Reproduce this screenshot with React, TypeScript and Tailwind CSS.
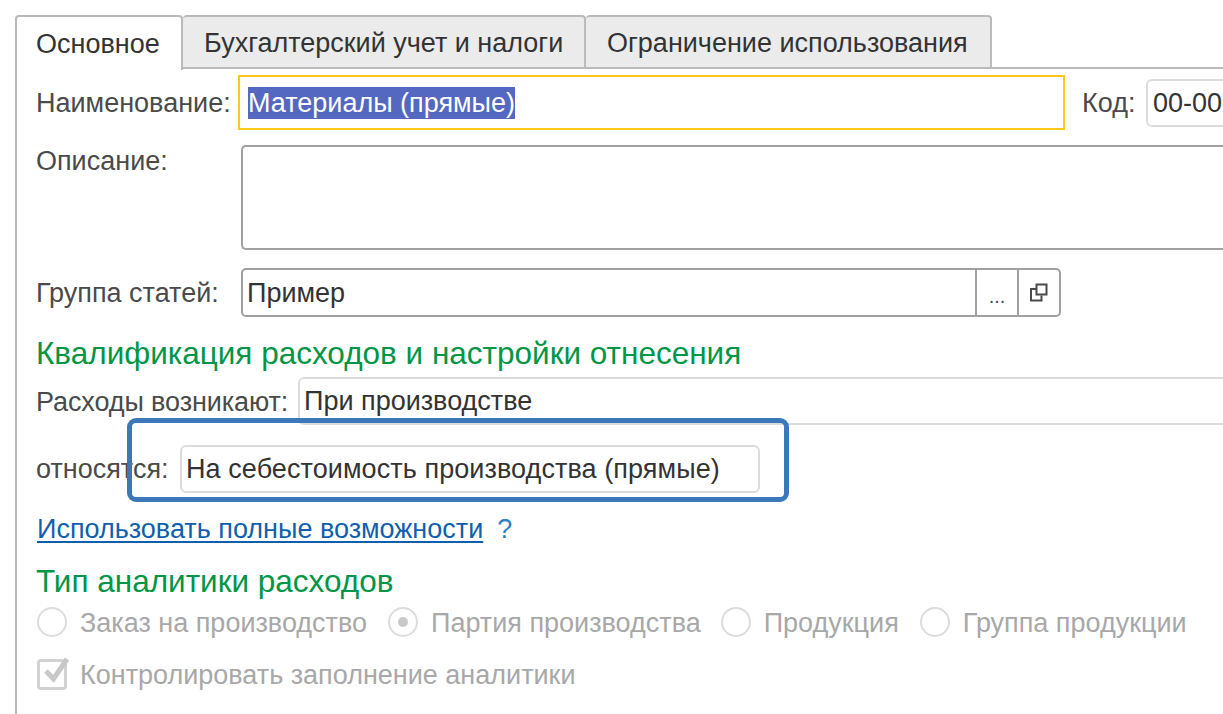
import React from "react";

function Radio({ label, checked, cls }: { label: string; checked?: boolean; cls: string }) {
  return (
    <div className={"flex items-center " + cls}>
      <span className="flex h-[30px] w-[30px] shrink-0 items-center justify-center rounded-full border-2 border-[#dcdcdc] bg-white">
        {checked && <span className="h-[10px] w-[10px] rounded-full bg-[#c8c8c8]" />}
      </span>
      <span className="ml-[13px] whitespace-nowrap pt-[1px] text-[#a8a8a8]">{label}</span>
    </div>
  );
}

export default function App() {
  return (
    <div className="relative h-[714px] w-[1223px] overflow-hidden bg-white pl-[15px] pt-[15px] font-['Liberation_Sans',Arial,sans-serif] text-[27px] leading-[30px] text-[#4a4a4a]">
      <div className="flex h-[55px] items-stretch">
        <div className="z-10 flex h-[55px] w-[168px] items-center rounded-t-[4px] border-x-2 border-t-2 border-[#bababa] bg-white pl-[19px] text-[#333]">
          Основное
        </div>
        <div className="flex h-[54px] w-[403px] items-center rounded-t-[4px] border-y-2 border-r-2 border-[#bababa] bg-[#ebebeb] pl-[21px] pt-[1px] text-[#333]">
          Бухгалтерский учет и налоги
        </div>
        <div className="flex h-[54px] w-[406px] items-center rounded-t-[4px] border-y-2 border-r-2 border-[#bababa] bg-[#ebebeb] pl-[21px] pt-[1px] text-[#333]">
          Ограничение использования
        </div>
        <div className="h-[54px] flex-1 border-b-2 border-[#bababa]" />
      </div>

      <div className="h-[700px] border-l-2 border-[#bababa] pl-[19px] pt-[5px]">
        <div className="flex h-[55px] items-center">
          <span className="w-[202px] shrink-0 whitespace-nowrap">Наименование:</span>
          <div className="flex h-[55px] w-[827px] shrink-0 items-center border-2 border-[#fcc916] pl-[8px]">
            <span className="whitespace-nowrap bg-[#5468c2] leading-[32px] text-white">Материалы (прямые)</span>
          </div>
          <span className="ml-[17px] w-[64px] shrink-0 whitespace-nowrap">Код:</span>
          <div className="flex h-[48px] w-[120px] shrink-0 items-center overflow-hidden rounded-l-[6px] border-y-2 border-l-2 border-[#dcdcdc] pl-[5px] text-[#333]">
            <span className="whitespace-nowrap">00-000000</span>
          </div>
        </div>

        <div className="mt-[15px] flex h-[105px]">
          <span className="w-[205px] shrink-0 pt-[1px]">Описание:</span>
          <div className="h-[105px] w-[1000px] shrink-0 rounded-l-[5px] border-y-2 border-l-2 border-[#a0a0a0]" />
        </div>

        <div className="mt-[18px] flex h-[49px] items-center">
          <span className="w-[205px] shrink-0 whitespace-nowrap pt-[1px]">Группа статей:</span>
          <div className="flex h-[49px] w-[820px] shrink-0 items-stretch rounded-[5px] border-2 border-[#a0a0a0]">
            <div className="flex flex-1 items-center pl-[4px] text-[#333]">Пример</div>
            <div className="flex w-[42px] justify-center border-l-2 border-[#a0a0a0] pt-[14px] text-[20px] leading-[24px] text-[#4a4a4a]">...</div>
            <div className="flex w-[42px] items-center justify-center border-l-2 border-[#a0a0a0]">
              <svg width="20" height="20" viewBox="0 0 20 20" fill="none" stroke="#4a4a4a" strokeWidth="2">
                <rect x="7.5" y="1.5" width="10" height="10" />
                <path d="M7 6H2V17.5H12.5V12.5" />
              </svg>
            </div>
          </div>
        </div>

        <div className="mt-[21px] whitespace-nowrap text-[31.5px] leading-[30px] text-[#009646]">Квалификация расходов и настройки отнесения</div>

        <div className="mt-[9px] flex h-[48px] items-center">
          <span className="w-[262px] shrink-0 whitespace-nowrap pt-[1px] tracking-[-0.1px]">Расходы возникают:</span>
          <div className="flex h-[48px] w-[1000px] shrink-0 items-center rounded-l-[6px] border-y-2 border-l-2 border-[#dcdcdc] pl-[4px] text-[#333]">
            При производстве
          </div>
        </div>

        <div className="mt-[20px] flex h-[48px] items-center">
          <span className="w-[144px] shrink-0 whitespace-nowrap pb-[1px]">относятся:</span>
          <div className="flex h-[48px] w-[580px] shrink-0 items-center rounded-[6px] border-2 border-[#dcdcdc] pb-[1px] pl-[4px] text-[#333] tracking-[0.08px]">
            На себестоимость производства (прямые)
          </div>
        </div>

        <div className="mt-[21px] flex h-[30px] items-center whitespace-nowrap">
          <a className="ml-[1px] text-[#0f5fae] underline underline-offset-[3px]">Использовать полные возможности</a>
          <span className="ml-[14px] text-[#2b7fc4]">?</span>
        </div>

        <div className="mt-[22px] whitespace-nowrap text-[31.5px] leading-[30px] text-[#009646]">Тип аналитики расходов</div>

        <div className="mt-[11px] flex h-[30px]">
          <Radio cls="ml-[1px]" label="Заказ на производство" />
          <Radio cls="ml-[21px]" checked label="Партия производства" />
          <Radio cls="ml-[20px]" label="Продукция" />
          <Radio cls="ml-[21px]" label="Группа продукции" />
        </div>

        <div className="mt-[22px] flex h-[30px] items-center">
          <span className="relative ml-[1px] h-[31px] w-[30px] shrink-0 rounded-[4px] border-[3px] border-[#d2d2d2] bg-white">
            <svg className="absolute left-[1px] top-[-8px]" width="30" height="32" viewBox="0 0 30 32" fill="none">
              <path d="M5 17L12.5 25L26 5" stroke="#c8c8c8" strokeWidth="5" />
            </svg>
          </span>
          <span className="ml-[13px] whitespace-nowrap pt-[1px] text-[#a8a8a8]">Контролировать заполнение аналитики</span>
        </div>
      </div>

      <div className="absolute left-[127px] top-[418px] h-[84px] w-[662px] rounded-[9px] border-[5px] border-[#3b78b9]" />
    </div>
  );
}
